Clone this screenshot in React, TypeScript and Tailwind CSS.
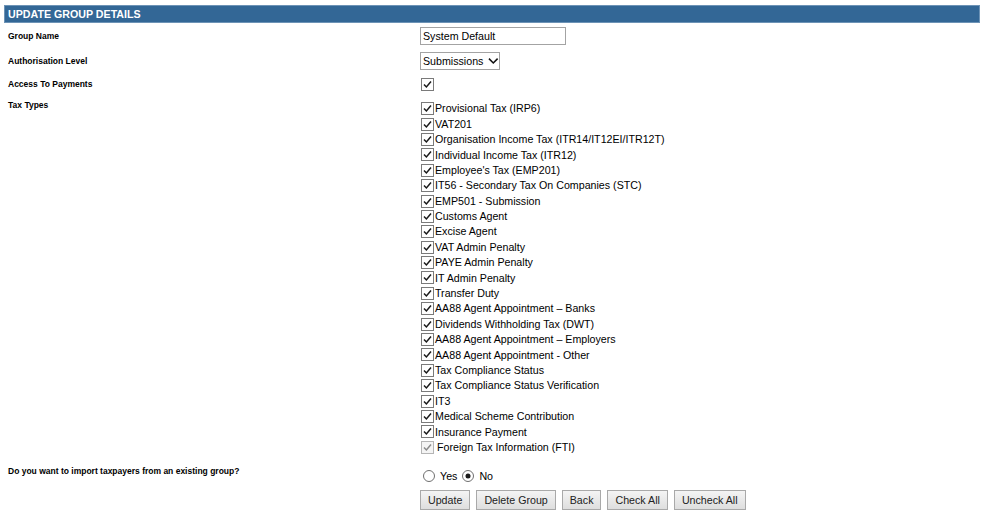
import * as React from 'react';

const taxTypes = [
  'Provisional Tax (IRP6)',
  'VAT201',
  'Organisation Income Tax (ITR14/IT12EI/ITR12T)',
  'Individual Income Tax (ITR12)',
  "Employee's Tax (EMP201)",
  'IT56 - Secondary Tax On Companies (STC)',
  'EMP501 - Submission',
  'Customs Agent',
  'Excise Agent',
  'VAT Admin Penalty',
  'PAYE Admin Penalty',
  'IT Admin Penalty',
  'Transfer Duty',
  'AA88 Agent Appointment – Banks',
  'Dividends Withholding Tax (DWT)',
  'AA88 Agent Appointment – Employers',
  'AA88 Agent Appointment - Other',
  'Tax Compliance Status',
  'Tax Compliance Status Verification',
  'IT3',
  'Medical Scheme Contribution',
  'Insurance Payment',
];

function CheckBox({ disabled = false }: { disabled?: boolean }) {
  return (
    <svg width="13" height="13" viewBox="0 0 13 13" className="shrink-0">
      <rect x="0.5" y="0.5" width="12" height="12" fill={disabled ? '#f4f4f4' : '#fff'} stroke={disabled ? '#b5b5b5' : '#7a7a7a'} />
      <path d="M3 6.5 L5.4 9 L10 3.5" fill="none" stroke={disabled ? '#8a8a8a' : '#1a1a1a'} strokeWidth="1.5" />
    </svg>
  );
}

function Radio({ checked = false }: { checked?: boolean }) {
  return (
    <svg width="12" height="12" viewBox="0 0 12 12" className="shrink-0">
      <circle cx="6" cy="6" r="5.5" fill="#fff" stroke="#6f6f6f" />
      {checked && <circle cx="6" cy="6" r="2.5" fill="#1a1a1a" />}
    </svg>
  );
}

function Label({ children }: { children: React.ReactNode }) {
  return <div className="pl-[4px] text-[8.5px] leading-[10px] font-bold text-black">{children}</div>;
}

function Btn({ children }: { children: React.ReactNode }) {
  return (
    <button className="h-[20px] px-[7px] border border-[#a9a9a9] bg-gradient-to-b from-[#f4f4f4] to-[#dedede] text-[10.67px] text-[#222] leading-none">
      {children}
    </button>
  );
}

export default function App() {
  return (
    <div className="w-[984px] h-[515px] bg-white px-[4px] pt-[5px] font-['Liberation_Sans',Arial,sans-serif] text-black">
      <div className="h-[18px] bg-[#336796] border border-[#6d93b6] flex items-center pl-[3px] text-[10.67px] font-bold text-white">
        UPDATE GROUP DETAILS
      </div>

      <div className="grid grid-cols-[416px_1fr]">
        <div className="h-[26px] flex items-center"><Label>Group Name</Label></div>
        <div className="h-[26px] flex items-center">
          <div className="w-[146px] h-[18px] border border-[#a3a3a3] text-[10.67px] pl-[2px] flex items-center">System Default</div>
        </div>

        <div className="h-[23px] flex items-center"><Label>Authorisation Level</Label></div>
        <div className="h-[23px] flex items-center">
          <div className="w-[80px] h-[18px] border border-[#a3a3a3] text-[10.67px] pl-[2px] flex items-center gap-[5px]">
            Submissions
            <svg width="11" height="8" viewBox="0 0 11 8">
              <path d="M1 1.5 L5.5 6 L10 1.5" fill="none" stroke="#111" strokeWidth="1.6" />
            </svg>
          </div>
        </div>

        <div className="h-[24px] flex items-center"><Label>Access To Payments</Label></div>
        <div className="h-[24px] flex items-center pl-[1px]"><CheckBox /></div>

        <div className="pt-[4px]"><Label>Tax Types</Label></div>
        <div className="pt-[5px] pl-[1px]">
          {taxTypes.map((t) => (
            <div key={t} className="h-[15.4px] flex items-center gap-[1px] text-[10.67px] leading-none">
              <CheckBox />
              <span>{t}</span>
            </div>
          ))}
          <div className="h-[15.4px] flex items-center gap-[3px] text-[10.67px] leading-none">
            <CheckBox disabled />
            <span>Foreign Tax Information (FTI)</span>
          </div>
        </div>

        <div className="pt-[11px]"><Label>Do you want to import taxpayers from an existing group?</Label></div>
        <div className="h-[33px] pl-[3px] pt-[9px] flex items-center text-[10.67px] leading-none">
          <Radio />
          <span className="ml-[5px] mr-[5px]">Yes</span>
          <Radio checked />
          <span className="ml-[5px]">No</span>
        </div>

        <div />
        <div className="flex gap-[6px] pt-[2px]">
          <Btn>Update</Btn>
          <Btn>Delete Group</Btn>
          <Btn>Back</Btn>
          <Btn>Check All</Btn>
          <Btn>Uncheck All</Btn>
        </div>
      </div>
    </div>
  );
}
